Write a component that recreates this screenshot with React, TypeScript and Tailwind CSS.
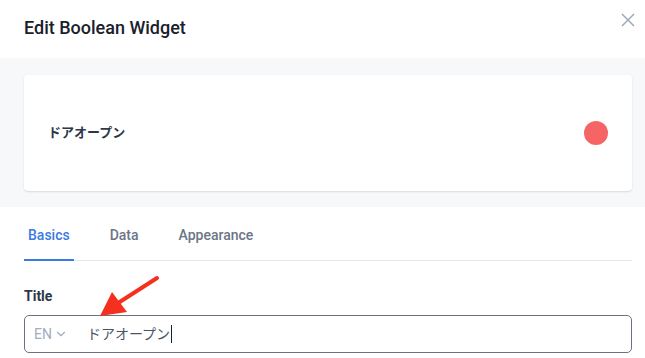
import { ChevronDown } from "lucide-react";

const font = { fontFamily: "Roboto, 'Noto Sans CJK JP', sans-serif" };

export default function App() {
    return (
        <div className="relative w-[645px] h-[358px] overflow-hidden bg-white" style={font}>
            {/* Header */}
            <div className="flex items-center justify-between h-[58px] pl-6 pr-[9px]">
                <h1 className="text-[18px] font-medium text-[#1a202c] mt-[-4px]">Edit Boolean Widget</h1>
                <button className="self-start mt-[12px] text-[#a0a8b8]">
                    <svg width="16" height="16" viewBox="0 0 16 16" fill="none" stroke="currentColor" strokeWidth="1.5">
                        <line x1="2" y1="2" x2="14" y2="14" />
                        <line x1="14" y1="2" x2="2" y2="14" />
                    </svg>
                </button>
            </div>

            {/* Preview */}
            <div className="bg-[#f7f8fa] pt-[17px] pb-[16px] pl-6 pr-[13px]">
                <div className="flex items-center justify-between h-[116px] bg-white rounded-sm shadow-[0_1px_2px_rgba(0,0,0,0.12)] px-6">
                    <span className="text-[13px] font-bold text-[#2d3748]">ドアオープン</span>
                    <span className="w-6 h-6 rounded-full bg-[#f56565]" />
                </div>
            </div>

            {/* Tabs + form */}
            <div className="pl-6 pr-[13px]">
                <div className="flex gap-8 border-b border-[#e2e8f0] text-[14px] font-medium">
                    <div className="px-1 pt-[18px] pb-[13px] text-[#3b7be0] border-b-2 border-[#3b7be0] mb-[-1px]">Basics</div>
                    <div className="px-1 pt-[18px] pb-[13px] text-[#6b7588]">Data</div>
                    <div className="px-1 pt-[18px] pb-[13px] text-[#6b7588]">Appearance</div>
                </div>

                <div className="pt-[25px] text-[14px] font-bold text-[#2d3748]">Title</div>
                <div className="mt-[8px] flex items-center h-[38px] border border-[#6b7280] rounded-[5px] px-[9px]">
                    <span className="text-[14px] text-[#a0aec0]">EN</span>
                    <ChevronDown className="w-[14px] h-[14px] ml-[2px] text-[#a0aec0]" strokeWidth={2} />
                    <span className="ml-[19px] text-[14px] text-[#4a5568]">ドアオープン</span>
                    <span className="w-px h-[18px] bg-[#1a202c] ml-px" />
                </div>
            </div>

            {/* Annotation arrow */}
            <svg className="absolute left-0 top-0 pointer-events-none" width="645" height="358">
                <line x1="157" y1="278" x2="115" y2="305" stroke="#f5301e" strokeWidth="4" strokeLinecap="round" />
                <polygon points="100,316 112,292 127,312" fill="#f5301e" />
            </svg>
        </div>
    );
}
